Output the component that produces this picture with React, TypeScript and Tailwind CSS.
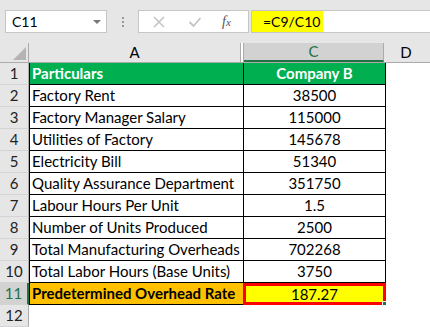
import { ChevronDown } from "lucide-react";

type Row = {
  label: string;
  value: string;
};

const rows: Row[] = [
  { label: "Factory Rent", value: "38500" },
  { label: "Factory Manager Salary", value: "115000" },
  { label: "Utilities of Factory", value: "145678" },
  { label: "Electricity Bill", value: "51340" },
  { label: "Quality Assurance Department", value: "351750" },
  { label: "Labour Hours Per Unit", value: "1.5" },
  { label: "Number of Units Produced", value: "2500" },
  { label: "Total Manufacturing Overheads", value: "702268" },
  { label: "Total Labor Hours (Base Units)", value: "3750" },
];

const font = { fontFamily: "Lato, 'Open Sans', sans-serif" };

function RowNum({ n, active = false }: { n: number; active?: boolean }) {
  return (
    <div
      className={
        active
          ? "w-[29px] shrink-0 h-full flex items-center justify-center bg-[#d2d2d2] border-r-2 border-r-[#217346] border-b border-b-[#d4d4d4] text-[#217346]"
          : "w-[29px] shrink-0 h-full flex items-center justify-center bg-[#e6e6e6] border-r border-r-[#ababab] border-b border-b-[#d4d4d4] text-[#222]"
      }
    >
      {n}
    </div>
  );
}

export default function App() {
  return (
    <div className="w-[430px] h-[327px] overflow-hidden bg-white text-[15px] text-black" style={font}>
      {/* formula bar */}
      <div className="h-[43px] bg-[#e6e6e6] flex items-start pt-[10px] pl-[5px]">
        <div className="w-[102px] h-[23px] bg-white border border-[#c6c6c6] flex items-center justify-between pl-[6px] pr-[5px] text-[14px]">
          <span>C11</span>
          <span className="w-0 h-0 border-l-[4px] border-r-[4px] border-t-[4px] border-l-transparent border-r-transparent border-t-[#777]" />
        </div>
        <div className="w-[31px] h-[23px] flex flex-col items-center justify-center gap-[2px]">
          <span className="w-[2px] h-[2px] bg-[#9a9a9a]" />
          <span className="w-[2px] h-[2px] bg-[#9a9a9a]" />
          <span className="w-[2px] h-[2px] bg-[#9a9a9a]" />
        </div>
        <div className="w-[111px] h-[23px] bg-white border border-[#c6c6c6] flex items-center">
          <svg width="14" height="14" viewBox="0 0 14 14" className="ml-[13px]">
            <path d="M2 2 L12 12 M12 2 L2 12" stroke="#c4c4c4" strokeWidth="1.6" fill="none" />
          </svg>
          <svg width="14" height="14" viewBox="0 0 14 14" className="ml-[22px]">
            <path d="M1.5 7 L5.5 11 L12.5 3" stroke="#c4c4c4" strokeWidth="1.8" fill="none" />
          </svg>
          <span className="ml-[20px] italic text-[14px] text-[#555]" style={{ fontFamily: "'Liberation Serif', serif" }}>
            f<span className="text-[11px]">x</span>
          </span>
        </div>
        <div className="flex-1 h-[23px] bg-white border border-[#c6c6c6] border-r-0 flex items-center ml-[2px]">
          <div className="h-full w-[71px] bg-[#ffff00] flex items-center pl-[11px] text-[14px]">=C9/C10</div>
        </div>
      </div>

      {/* column headers */}
      <div className="h-[20px] flex bg-[#e6e6e6] border-b border-b-[#ababab]">
        <div className="w-[29px] shrink-0 h-full border-r border-r-[#ababab] flex items-end justify-end pr-[2px] pb-[2px]">
          <span className="w-0 h-0 border-l-[13px] border-t-[13px] border-l-transparent border-t-transparent border-r-0 border-b-[0] bg-transparent" style={{ borderBottom: "13px solid #b4b4b4", borderLeft: "13px solid transparent", borderTop: 0 }} />
        </div>
        <div className="w-[212px] shrink-0 h-full flex items-center justify-center border-r border-r-[#ababab]">A</div>
        <div className="w-[3px] shrink-0 h-full bg-white border-r border-r-[#ababab]" />
        <div className="w-[140px] shrink-0 h-full flex items-center justify-center bg-[#d2d2d2] border-b-2 border-b-[#217346] text-[#217346] border-r border-r-[#ababab]">
          C
        </div>
        <div className="flex-1 h-full flex items-center justify-center pr-[2px]">D</div>
      </div>

      {/* header row */}
      <div className="h-[22px] flex">
        <RowNum n={1} />
        <div className="w-[214px] shrink-0 h-full bg-[#00b050] border-l border-b border-black text-white font-bold flex items-center pl-[2px]">
          Particulars
        </div>
        <div className="w-[143px] shrink-0 h-full bg-[#00b050] border-l border-r border-b border-black text-white font-bold flex items-center justify-center">
          Company B
        </div>
      </div>

      {rows.map((r, i) => (
        <div key={r.label} className="h-[22px] flex">
          <RowNum n={i + 2} />
          <div className="w-[214px] shrink-0 h-full border-l border-b border-black flex items-center pl-[2px] whitespace-nowrap overflow-hidden">
            {r.label}
          </div>
          <div className="w-[143px] shrink-0 h-full border-l border-r border-b border-black flex items-center justify-center">
            {r.value}
          </div>
        </div>
      ))}

      <div className="h-[22px] flex">
        <RowNum n={11} active />
        <div className="w-[214px] shrink-0 h-full bg-[#ffc000] border-l border-b border-black font-bold flex items-center pl-[2px] whitespace-nowrap">
          Predetermined Overhead Rate
        </div>
        <div className="relative w-[143px] shrink-0 h-full bg-[#ffff00] border-[3px] border-[#ff0000] flex items-center justify-center">
          187.27
          <span className="absolute -right-[4px] -bottom-[4px] w-[5px] h-[5px] bg-[#217346] border border-white" />
        </div>
      </div>

      <div className="h-[22px] flex">
        <RowNum n={12} />
      </div>
    </div>
  );
}
